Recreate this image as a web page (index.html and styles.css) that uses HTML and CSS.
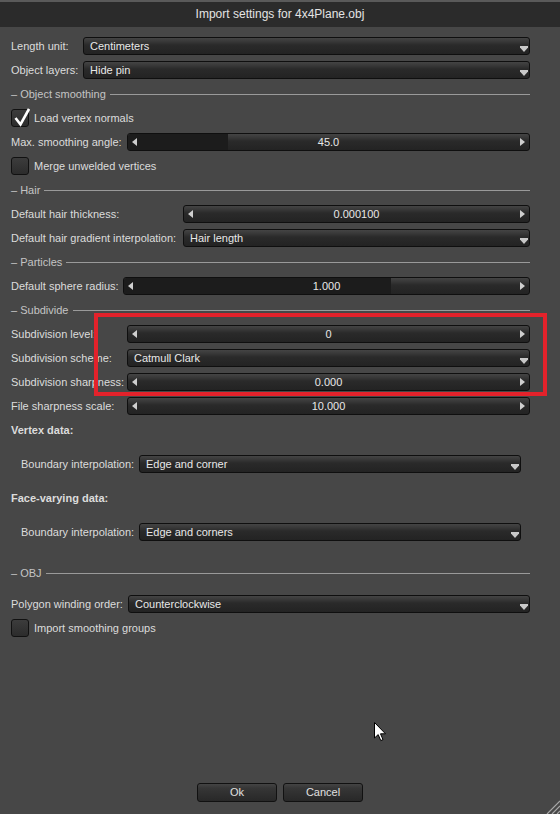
FILE: index.html
```html
<!DOCTYPE html>
<html lang="en">
<head>
    <meta charset="UTF-8">
    <meta name="viewport" content="width=device-width, initial-scale=1.0">
    <title>Import settings for 4x4Plane.obj</title>
    <link rel="stylesheet" href="styles.css">
</head>
<body>
    <div class="dialog">
        <div class="titlebar">Import settings for 4x4Plane.obj</div>

        <div class="form">
            <div class="fields w72">
                <label>Length unit:</label>
                <div class="combo">Centimeters</div>
                <label>Object layers:</label>
                <div class="combo">Hide pin</div>
            </div>

            <div class="sep">– Object smoothing</div>
            <div class="check on"><span class="box"></span>Load vertex normals</div>
            <div class="fields w116">
                <label>Max. smoothing angle:</label>
                <div class="slider"><div class="fill" style="width: 25%"></div><span>45.0</span></div>
            </div>
            <div class="check"><span class="box"></span>Merge unwelded vertices</div>

            <div class="sep">– Hair</div>
            <div class="fields w172">
                <label>Default hair thickness:</label>
                <div class="slider"><span>0.000100</span></div>
                <label>Default hair gradient interpolation:</label>
                <div class="combo">Hair length</div>
            </div>

            <div class="sep">– Particles</div>
            <div class="fields w112">
                <label>Default sphere radius:</label>
                <div class="slider"><div class="fill" style="width: 66%"></div><span>1.000</span></div>
            </div>

            <div class="sep">– Subdivide</div>
            <div class="fields w116">
                <label>Subdivision level:</label>
                <div class="slider"><span>0</span></div>
                <label>Subdivision scheme:</label>
                <div class="combo">Catmull Clark</div>
                <label>Subdivision sharpness:</label>
                <div class="slider"><span>0.000</span></div>
                <label>File sharpness scale:</label>
                <div class="slider"><span>10.000</span></div>
            </div>

            <div class="heading">Vertex data:</div>
            <div class="sub">
                <div class="fields w118">
                    <label>Boundary interpolation:</label>
                    <div class="combo">Edge and corner</div>
                </div>
            </div>

            <div class="heading">Face-varying data:</div>
            <div class="sub">
                <div class="fields w118">
                    <label>Boundary interpolation:</label>
                    <div class="combo">Edge and corners</div>
                </div>
            </div>

            <div class="sep sep-obj">– OBJ</div>
            <div class="fields w117">
                <label>Polygon winding order:</label>
                <div class="combo">Counterclockwise</div>
            </div>
            <div class="check"><span class="box"></span>Import smoothing groups</div>
        </div>

        <div class="footer">
            <div class="btn">Ok</div>
            <div class="btn">Cancel</div>
        </div>

        <!-- highlight around the subdivision controls -->
        <div class="mark"></div>

        <svg class="pointer" width="13" height="20" viewBox="0 0 13 20">
            <path d="M0.5 0.5 L0.5 16 L4.2 12.6 L6.8 18.6 L9 17.6 L6.5 11.8 L11.5 11.8 Z" fill="#fff" stroke="#000" stroke-width="1"/>
        </svg>

        <svg class="grip" width="18" height="18" viewBox="0 0 18 18">
            <path d="M18 5 L5 18 M18 10 L10 18 M18 15 L15 18" stroke="#a8a8a8" stroke-width="1.2"/>
        </svg>
    </div>
</body>
</html>
```

FILE: styles.css
```css
body {
    margin: 0;
    background-color: #474747;
    font-family: "Liberation Sans", Arial, sans-serif;
    font-size: 11px;
    color: #dcdcdc;
}

.dialog {
    position: relative;
    width: 560px;
    height: 814px;
    display: flex;
    flex-direction: column;
    background-color: #474747;
    overflow: hidden;
}

.titlebar {
    flex: none;
    height: 27px;
    box-sizing: border-box;
    border-top: 2px solid #5a5a5a;
    background-color: #2b2b2b;
    text-align: center;
    line-height: 24px;
    font-size: 12px;
    color: #e4e4e4;
}

.form {
    padding: 10px 30px 0 11px;
    display: flex;
    flex-direction: column;
    gap: 6px;
}

.fields {
    display: grid;
    row-gap: 6px;
    align-items: center;
}

.w72 { grid-template-columns: 72px 1fr; }
.w112 { grid-template-columns: 112px 1fr; }
.w116 { grid-template-columns: 116px 1fr; }
.w117 { grid-template-columns: 117px 1fr; }
.w118 { grid-template-columns: 118px 1fr; }
.w172 { grid-template-columns: 172px 1fr; }

.fields label {
    line-height: 18px;
    white-space: nowrap;
}

.combo,
.slider {
    position: relative;
    height: 18px;
    box-sizing: border-box;
    border: 1px solid #0f0f0f;
    border-radius: 3px;
    background: linear-gradient(#444 0, #3a3a3a 3px, #2a2a2a 7px, #232323 100%);
    line-height: 16px;
    color: #e8e8e8;
}

.combo {
    padding-left: 6px;
}

.combo::after {
    content: "";
    position: absolute;
    right: 1px;
    bottom: 2px;
    width: 8px;
    height: 6px;
    background-color: #c8c8c8;
    clip-path: polygon(0 0, 100% 0, 100% 25%, 50% 100%, 0 25%);
}

.slider .fill {
    position: absolute;
    left: 0;
    top: 0;
    bottom: 0;
    background-color: #1c1c1c;
    border-radius: 2px 0 0 2px;
}

.slider span {
    position: relative;
    display: block;
    text-align: center;
}

.slider::before,
.slider::after {
    content: "";
    position: absolute;
    top: 4px;
    width: 5px;
    height: 8px;
    background-color: #cfcfcf;
    z-index: 1;
}

.slider::before {
    left: 4px;
    clip-path: polygon(100% 0, 100% 100%, 0 50%);
}

.slider::after {
    right: 4px;
    clip-path: polygon(0 0, 100% 50%, 0 100%);
}

.sep {
    display: flex;
    align-items: center;
    gap: 4px;
    height: 18px;
    color: #c4c4c4;
    white-space: nowrap;
}

.sep::after {
    content: "";
    flex: 1;
    height: 1px;
    margin-top: 1px;
    background-color: #9a9a9a;
}

.sep-obj {
    margin: 7px 0;
}

.check {
    display: flex;
    align-items: center;
    gap: 5px;
    height: 18px;
}

.check .box {
    position: relative;
    width: 18px;
    height: 18px;
    box-sizing: border-box;
    border: 1px solid #111;
    border-radius: 3px;
    background: linear-gradient(#3c3c3c, #2c2c2c);
}

.check.on .box::after {
    content: "";
    position: absolute;
    left: 2px;
    top: -3px;
    width: 16px;
    height: 20px;
    background: url("data:image/svg+xml,%3Csvg xmlns='http://www.w3.org/2000/svg' width='16' height='20'%3E%3Cpath d='M1.5 11 L6.5 17.5 L15 2' fill='none' stroke='white' stroke-width='2.6'/%3E%3C/svg%3E") no-repeat;
}

.heading {
    font-weight: bold;
    line-height: 18px;
}

.sub {
    padding: 10px 9px 10px 10px;
}

.footer {
    margin-top: auto;
    display: flex;
    justify-content: center;
    gap: 6px;
    padding-bottom: 12px;
}

.btn {
    width: 80px;
    height: 19px;
    box-sizing: border-box;
    border: 1px solid #111;
    border-radius: 3px;
    background: linear-gradient(#444 0, #363636 4px, #282828 100%);
    text-align: center;
    line-height: 17px;
    color: #e0e0e0;
}

.mark {
    position: absolute;
    left: 94px;
    top: 313px;
    width: 453px;
    height: 83px;
    box-sizing: border-box;
    border: 4px solid #e3222b;
}

.pointer {
    position: absolute;
    left: 374px;
    top: 722px;
}

.grip {
    position: absolute;
    right: 0;
    bottom: 0;
}
```
